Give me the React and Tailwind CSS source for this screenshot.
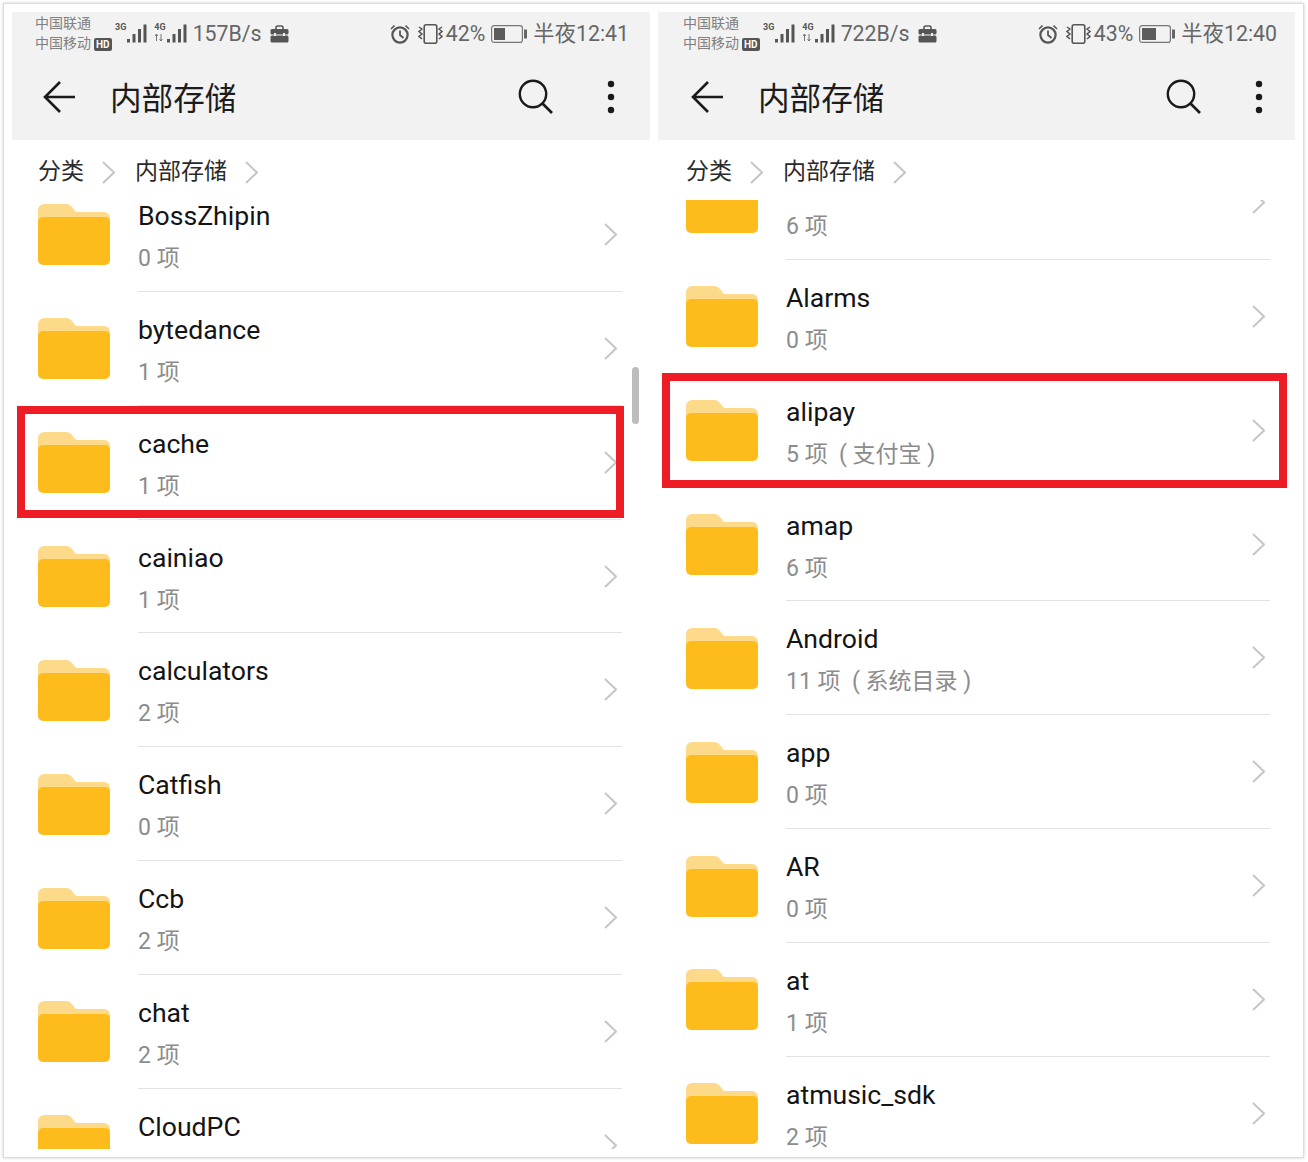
const Folder = () => (
  <svg width="72" height="61" viewBox="0 0 72 61" className="shrink-0">
    <path d="M0 6a6 6 0 0 1 6-6h22c3 0 4 1 6 3l3 4c1 1 2 1 3 1h26a6 6 0 0 1 6 6v12H0z" fill="#fdd98a" />
    <path d="M0 18a5 5 0 0 1 5-5h62a5 5 0 0 1 5 5v38a5 5 0 0 1-5 5H5a5 5 0 0 1-5-5z" fill="#febb1c" />
  </svg>
);

const Chevron = ({ w = 13, h = 23, color = "#c6c6c6", sw = 2 }) => (
  <svg width={w} height={h} viewBox="0 0 13 23" className="shrink-0">
    <path d="M1 1l11 10.5L1 22" fill="none" stroke={color} strokeWidth={sw} />
  </svg>
);

const Bars = () => (
  <svg width="21" height="20" viewBox="0 0 21 20" className="shrink-0">
    <rect x="0" y="15" width="3" height="3.500" fill="#555" />
    <rect x="5.500" y="10" width="3" height="8.500" fill="#555" />
    <rect x="11" y="5" width="3" height="13.500" fill="#555" />
    <rect x="16.500" y="0.500" width="3" height="18" fill="#555" />
  </svg>
);

const Net = ({ label, arrows }) => (
  <div className="flex items-start">
    <div className="flex flex-col">
      <span className="mt-[-1px] text-[9px] leading-[10px] font-bold text-[#555]">{label}</span>
      {arrows ? (
        <svg width="10" height="9" viewBox="0 0 10 9" className="mt-[1px]">
          <path d="M2.500 8V1M1 3l1.500-2L4 3M7 1v7M5.500 6L7 8l1.500-2" fill="none" stroke="#777" strokeWidth="1" />
        </svg>
      ) : null}
    </div>
    <div className="ml-[1px] mt-[1px]"><Bars /></div>
  </div>
);

const Case = () => (
  <svg width="19" height="18" viewBox="0 0 19 18" className="shrink-0">
    <path d="M6 4V2.500A1.500 1.500 0 0 1 7.500 1h4A1.500 1.500 0 0 1 13 2.500V4" fill="none" stroke="#555" strokeWidth="1.600" />
    <rect x="0.500" y="4" width="18" height="5.500" rx="1.500" fill="#555" />
    <rect x="0.500" y="10.500" width="18" height="7" rx="1.500" fill="#555" />
    <rect x="4" y="8" width="2" height="3" fill="#eee" />
    <rect x="13" y="8" width="2" height="3" fill="#eee" />
  </svg>
);

const Alarm = () => (
  <svg width="20" height="20" viewBox="0 0 20 20" className="shrink-0">
    <circle cx="10" cy="11" r="7.600" fill="none" stroke="#555" strokeWidth="2.200" />
    <path d="M10 6.500V11l3.500 3" fill="none" stroke="#555" strokeWidth="1.800" />
    <path d="M1 5l3.500-3.500M19 5l-3.500-3.500" stroke="#555" strokeWidth="1.600" />
  </svg>
);

const Vibrate = () => (
  <svg width="25" height="20" viewBox="0 0 25 20" className="shrink-0">
    <rect x="6.200" y="0.800" width="12.600" height="18.400" rx="2" fill="none" stroke="#555" strokeWidth="1.600" />
    <path d="M1 3l3 2-3 2.500 3 2.500-3 2.500 3 2.500M24 3l-3 2 3 2.500-3 2.500 3 2.500-3 2.500" fill="none" stroke="#555" strokeWidth="1.500" />
  </svg>
);

const Battery = ({ fill }) => (
  <svg width="36" height="18" viewBox="0 0 36 18" className="shrink-0">
    <rect x="0.600" y="0.600" width="30.800" height="16.800" rx="2.500" fill="none" stroke="#777" strokeWidth="1.200" />
    <rect x="3" y="3" width={fill} height="12" fill="#5c5c5c" />
    <rect x="33" y="4.500" width="3" height="9" fill="#666" />
  </svg>
);

const Row = ({ name, sub }) => (
  <div className="flex h-[113.86px] items-center">
    <div className="ml-[26px] mr-[28px] flex items-center"><Folder /></div>
    <div className="flex h-full w-[484px] items-center justify-between border-b border-[#e2e2e2]">
      <div className="flex flex-col pt-[3px]">
        <span className="h-[34px] text-[26.6px] leading-[34px] text-[#141414]">{name}</span>
        <span className="mt-[12px] h-[28px] text-[23px] leading-[28px] text-[#8c8c8c]">{sub}</span>
      </div>
      <div className="mr-[5px] flex items-center"><Chevron /></div>
    </div>
  </div>
);

const Panel = ({ speed, pct, fill, time, rows, listClass, statusPad, toolPad, crumbPad, widthClass }) => (
  <div className={`relative flex h-full flex-col ${widthClass}`}>
    <div className="bg-[#f2f2f2]">
      <div className={`flex h-[42px] items-center ${statusPad}`}>
        <div className="flex w-[80px] flex-col text-[14px] leading-[20px] text-[#808080]">
          <span>中国联通</span>
          <div className="flex items-center">
            <span>中国移动</span>
            <span className="ml-[3px] mt-[3px] rounded-[2px] bg-[#555] px-[2px] text-[10px] leading-[13px] font-bold text-white">HD</span>
          </div>
        </div>
        <div className="flex gap-[6px]">
          <Net label="3G" />
          <Net label="4G" arrows />
        </div>
        <span className="ml-[5px] mt-[2px] text-[21.3px] leading-[28px] text-[#666]">{speed}</span>
        <div className="ml-[8px] mt-[1px]"><Case /></div>
        <div className="ml-auto mt-[2px] flex items-center">
          <Alarm />
          <div className="ml-[8px]"><Vibrate /></div>
          <span className="ml-[3px] text-[21.3px] leading-[28px] text-[#666]">{pct}</span>
          <div className="ml-[6px]"><Battery fill={fill} /></div>
          <span className="ml-[6px] text-[21.3px] leading-[28px] text-[#666]">{time}</span>
        </div>
      </div>
      <div className={`flex h-[86px] items-center ${toolPad}`}>
        <svg width="34" height="34" viewBox="0 0 34 34" className="shrink-0">
          <path d="M32 17H3M17 2L2 17l15 15" fill="none" stroke="#1a1a1a" strokeWidth="2.600" />
        </svg>
        <span className="ml-[33px] mt-[5px] text-[31.600px] leading-[40px] text-[#1c1c1c]">内部存储</span>
        <svg width="36" height="36" viewBox="0 0 36 36" className="ml-auto shrink-0">
          <circle cx="15" cy="15" r="13.200" fill="none" stroke="#1a1a1a" strokeWidth="2.400" />
          <path d="M24.500 24.500L34 34" stroke="#1a1a1a" strokeWidth="2.600" />
        </svg>
        <svg width="8" height="34" viewBox="0 0 8 34" className="ml-[53px] shrink-0">
          <circle cx="4" cy="4" r="3.200" fill="#1a1a1a" />
          <circle cx="4" cy="17" r="3.200" fill="#1a1a1a" />
          <circle cx="4" cy="30" r="3.200" fill="#1a1a1a" />
        </svg>
      </div>
    </div>
    <div className={`flex h-[60px] shrink-0 items-center pt-[4px] text-[23px] text-[#2a2a2a] ${crumbPad}`}>
      <span>分类</span>
      <div className="ml-[18px]"><Chevron w={13} h={25} /></div>
      <span className="ml-[20px]">内部存储</span>
      <div className="ml-[18px]"><Chevron w={13} h={25} /></div>
    </div>
    <div className="min-h-0 flex-1 overflow-hidden">
      <div className={listClass}>
        {rows.map((r) => (
          <Row key={r[0]} name={r[1]} sub={r[2]} />
        ))}
      </div>
    </div>
  </div>
);

const leftRows = [
  ["r1", "BossZhipin", "0 项"],
  ["r2", "bytedance", "1 项"],
  ["r3", "cache", "1 项"],
  ["r4", "cainiao", "1 项"],
  ["r5", "calculators", "2 项"],
  ["r6", "Catfish", "0 项"],
  ["r7", "Ccb", "2 项"],
  ["r8", "chat", "2 项"],
  ["r9", "CloudPC", ""],
];

const rightRows = [
  ["r1", "", "6 项"],
  ["r2", "Alarms", "0 项"],
  ["r3", "alipay", "5 项\u00a0\u00a0(\u00a0支付宝\u00a0)"],
  ["r4", "amap", "6 项"],
  ["r5", "Android", "11 项\u00a0\u00a0(\u00a0系统目录\u00a0)"],
  ["r6", "app", "0 项"],
  ["r7", "AR", "0 项"],
  ["r8", "at", "1 项"],
  ["r9", "atmusic_sdk", "2 项"],
];

export default function App() {
  return (
    <div className="h-[1162px] w-[1308px] bg-white p-[3px] font-['Roboto','Noto_Sans_CJK_SC',sans-serif]">
      <div className="relative flex h-[1155px] w-[1301px] gap-[8px] border border-[#dcdcdc] bg-white pt-[8px] pb-[8px] pl-[8px] shadow-[0_0_3px_#d0d0d0]">
        <Panel
          speed="157B/s"
          pct="42%"
          fill={11}
          time="半夜12:41"
          rows={leftRows}
          listClass="-mt-[22px]"
          statusPad="pl-[23px] pr-[21px]"
          toolPad="pl-[31px] pr-[35px]"
          crumbPad="pl-[26px]"
          widthClass="w-[638px]"
        />
        <Panel
          speed="722B/s"
          pct="43%"
          fill={14}
          time="半夜12:40"
          rows={rightRows}
          listClass="-mt-[54px] pl-[2px]"
          statusPad="pl-[25px] pr-[18px]"
          toolPad="pl-[33px] pr-[32px]"
          crumbPad="pl-[28px]"
          widthClass="w-[637px]"
        />
        <div className="absolute left-[13px] top-[402px] h-[112px] w-[607px] border-[8px] border-[#ee1c25]" />
        <div className="absolute left-[658px] top-[369px] h-[115px] w-[625px] border-[8px] border-[#ee1c25]" />
        <div className="absolute left-[628px] top-[363px] h-[57px] w-[7px] rounded-full bg-[#bdbdbd]" />
      </div>
    </div>
  );
}
